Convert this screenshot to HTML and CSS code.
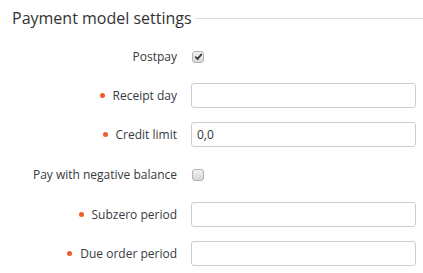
FILE: index.html
```html
<!DOCTYPE html>
<html>
<head>
    <title>Payment model settings</title>
    <link rel="stylesheet" href="styles.css">
</head>
<body>
    <div class="section">
        <div class="section-head">
            <h2>Payment model settings</h2>
            <div class="rule"></div>
        </div>

        <div class="form">
            <label class="lbl">Postpay</label>
            <div class="ctl"><span class="check checked"><svg viewBox="0 0 10 10" width="9" height="9"><path d="M1.5 5.2 L4 7.6 L8.6 2.2" fill="none" stroke="#333" stroke-width="2"/></svg></span></div>

            <label class="lbl req">Receipt day</label>
            <div class="ctl"><input type="text" class="field"></div>

            <label class="lbl req">Credit limit</label>
            <div class="ctl"><input type="text" class="field" value="0,0"></div>

            <label class="lbl">Pay with negative balance</label>
            <div class="ctl"><span class="check"></span></div>

            <label class="lbl req">Subzero period</label>
            <div class="ctl"><input type="text" class="field"></div>

            <label class="lbl req">Due order period</label>
            <div class="ctl"><input type="text" class="field"></div>
        </div>
    </div>
</body>
</html>
```

FILE: styles.css
```css
body { margin: 0; font-family: "Open Sans", Arial, sans-serif; color: #333; background: #fff; }
.section { padding: 6px 0 0 12px; }
.section-head { display: flex; align-items: center; height: 24px; }
.section-head h2 { margin: 0; font-size: 16px; font-weight: normal; color: #333; white-space: nowrap; }
.rule { flex: 1; border-top: 1px solid #d7dde4; margin-left: 3px; margin-top: 1px; }
.form { display: grid; grid-template-columns: 165px 225px; grid-template-rows: 39px 39px 39px 41px 39px 39px; column-gap: 14px; align-items: center; margin-top: 7px; }
.lbl { text-align: right; font-size: 12px; color: #353a42; }
.req::before { content: ""; display: inline-block; width: 5px; height: 5px; border-radius: 50%; background: #f15a2b; margin-right: 8px; vertical-align: middle; position: relative; top: -1px; }
.field { box-sizing: border-box; width: 225px; height: 25px; border: 1px solid #c9ced5; border-radius: 3px; padding: 0 5px; font-family: inherit; font-size: 12px; color: #333; outline: none; }
.check { display: flex; align-items: center; justify-content: center; box-sizing: border-box; width: 12px; height: 12px; border: 1px solid #b3b3b3; border-radius: 3px; background: linear-gradient(#f1f1f1, #d8d8d8); margin-left: 1px; }
```
